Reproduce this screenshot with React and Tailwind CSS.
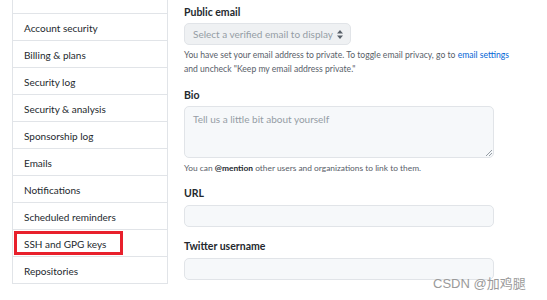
const NAV = [
  '',
  'Account security',
  'Billing & plans',
  'Security log',
  'Security & analysis',
  'Sponsorship log',
  'Emails',
  'Notifications',
  'Scheduled reminders',
  'SSH and GPG keys',
  'Repositories',
]

const font = { fontFamily: 'Lato, "Noto Sans", Arial, sans-serif' }

function Label({ children }) {
  return <div className="text-[10.5px] font-bold leading-[14px] text-[#24292e]">{children}</div>
}

export default function App() {
  return (
    <div className="relative h-[300px] w-[547px] overflow-hidden bg-white" style={font}>
      <div className="flex items-start">
        <nav className="ml-[12px] mt-[-13px] w-[156px] border-x border-[#e1e4e8]">
          {NAV.map((item, i) => (
            <div
              key={i}
              className="relative flex h-[27px] items-center border-b border-[#e1e4e8] pl-[11px] pt-[2px] text-[10px] text-[#24292e]"
            >
              {item}
              {item === 'SSH and GPG keys' && (
                <span className="absolute left-[1px] top-[1px] h-[24px] w-[109px] border-[3px] border-[#e8202c]" />
              )}
            </div>
          ))}
        </nav>

        <main className="ml-[16px] w-[310px] pt-[5px]">
          <Label>Public email</Label>
          <div className="mt-[4px] flex h-[22px] w-[167px] items-center justify-between rounded-[5px] border border-[#e1e4e8] bg-[#eff1f3] pl-[8px] pr-[7px] text-[10px] text-[#959da5]">
            <span className="whitespace-nowrap">Select a verified email to display</span>
            <svg width="6" height="9" viewBox="0 0 6 9" className="text-[#586069]">
              <path d="M3 0L6 3.5H0Z M3 9L0 5.5H6Z" fill="currentColor" />
            </svg>
          </div>
          <p className="mt-[3px] whitespace-nowrap text-[8.6px] leading-[14px] text-[#586069]">
            You have set your email address to private. To toggle email privacy, go to{' '}
            <span className="text-[#0366d6]">email settings</span>
            <br />
            and uncheck "Keep my email address private."
          </p>

          <div className="mt-[12px]">
            <Label>Bio</Label>
          </div>
          <div className="relative mt-[4px] h-[52px] w-[310px] rounded-[5px] border border-[#e1e4e8] bg-[#f6f8fa] px-[8px] pt-[5px] text-[10px] text-[#959da5]">
            Tell us a little bit about yourself
            <svg width="7" height="7" viewBox="0 0 7 7" className="absolute bottom-[1px] right-[1px]">
              <path d="M7 1L1 7M7 4L4 7" stroke="#959da5" strokeWidth="1" />
            </svg>
          </div>
          <p className="mt-[3px] text-[8.4px] leading-[14px] text-[#586069]">
            You can <span className="font-bold text-[#24292e]">@mention</span> other users and organizations to link to them.
          </p>

          <div className="mt-[11px]">
            <Label>URL</Label>
          </div>
          <div className="mt-[5px] h-[22px] w-[310px] rounded-[5px] border border-[#e1e4e8] bg-[#f6f8fa]" />

          <div className="mt-[12px]">
            <Label>Twitter username</Label>
          </div>
          <div className="mt-[5px] h-[22px] w-[310px] rounded-[5px] border border-[#e1e4e8] bg-[#f6f8fa]" />
        </main>
      </div>

      <div className="pointer-events-none absolute left-[433px] top-[274px] text-[13px] text-[#9a9a9a]" style={{ fontFamily: '"Liberation Sans", "Noto Sans CJK SC", sans-serif' }}>
        CSDN @加鸡腿
      </div>
    </div>
  )
}
